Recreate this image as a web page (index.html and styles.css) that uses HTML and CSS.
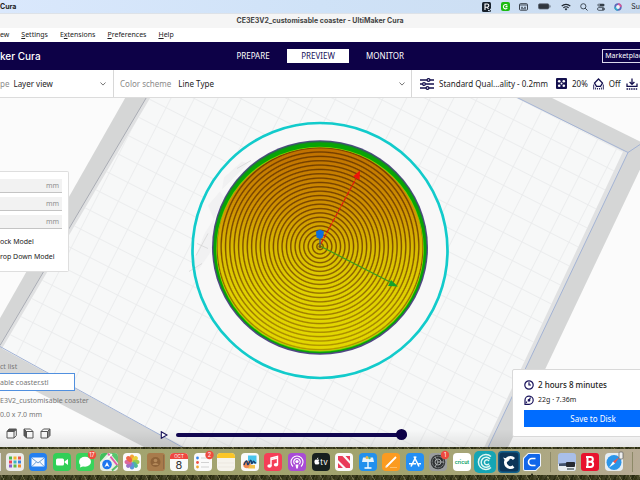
FILE: index.html
```html
<!DOCTYPE html>
<html lang="en">
<head>
<meta charset="utf-8">
<title>UltiMaker Cura</title>
<link rel="stylesheet" href="styles.css">
</head>
<body>
<header class="macbar">
  <span class="mac-app">Cura</span>
  <div class="mac-status">
    <svg width="10" height="10" viewBox="0 0 10 10"><rect width="9" height="10" rx="1.5" fill="#17212b"/><path d="M3 8V2h2.2a1.5 1.5 0 0 1 0 3.2H3M5 5.2 6.5 7" fill="none" stroke="#fff" stroke-width="1.1"/><path d="m6 8 1.2 1.2L9.6 6" fill="none" stroke="#c9d8ea"/></svg>
    <svg width="9" height="9" viewBox="0 0 9 9"><rect width="9" height="9" rx="2" fill="#1dbb12"/><path d="M6.300 3.300A2.200 2.200 0 1 0 6.300 6M4.500 4.600h2" fill="none" stroke="#fff" stroke-width="1.1"/></svg>
    <svg width="9" height="8" viewBox="0 0 9 8"><rect x=".5" y=".7" width="8" height="6.5" rx="1" fill="none" stroke="#39424d"/><path d="M1 2h7M2 4.300h2M5 4.300h2M2 5.800h5" stroke="#39424d" stroke-width=".9"/></svg>
    <svg class="battery" width="13" height="7" viewBox="0 0 13 7"><rect x=".4" y=".8" width="10.6" height="5.2" rx="1.4" fill="#30363e" stroke="#5c6672" stroke-width=".7"/><path d="M12 2.400v2" stroke="#5c6672"/></svg>
    <svg width="10" height="8" viewBox="0 0 10 8"><path d="M.7 3.100a6 6 0 0 1 8.600 0M2.400 4.900a3.700 3.700 0 0 1 5.200 0" fill="none" stroke="#1f2730" stroke-width="1.3"/><path d="m5 7.600 1.400-1.700a2 2 0 0 0-2.800 0z" fill="#1f2730"/></svg>
    <svg width="8" height="8" viewBox="0 0 8 8"><circle cx="3.3" cy="3.3" r="2.6" fill="none" stroke="#333d48" stroke-width=".9"/><path d="m5.200 5.200 2.300 2.300" stroke="#333d48"/></svg>
    <svg width="8" height="8" viewBox="0 0 8 8"><rect x=".5" y=".7" width="7" height="2.7" rx="1.3" fill="#333d48"/><circle cx="2" cy="2" r=".8" fill="#d5e4f6"/><rect x=".5" y="4.6" width="7" height="2.7" rx="1.3" fill="none" stroke="#333d48" stroke-width=".8"/><circle cx="6" cy="6" r="1" fill="#333d48"/></svg>
    <svg width="8" height="8" viewBox="0 0 8 8"><circle cx="4" cy="4" r="3.7" fill="#5b68b8"/><path d="M4 .3A3.700 3.700 0 0 1 7.700 4H4z" fill="#d4589a"/><path d="M.3 4A3.700 3.700 0 0 0 4 7.700V4z" fill="#36a9c9"/><circle cx="4" cy="4" r="1.9" fill="#f3f5fa"/></svg>
    <span class="mac-clock">Su</span>
  </div>
</header>
<div class="titlebar">CE3E3V2_customisable coaster - UltiMaker Cura</div>
<nav class="menubar">
  <a class="menu-view" href="#">ew</a>
  <a href="#"><u>S</u>ettings</a>
  <a href="#">E<u>x</u>tensions</a>
  <a href="#"><u>P</u>references</a>
  <a href="#"><u>H</u>elp</a>
</nav>
<div class="appbar">
  <div class="brand">ker Cura</div>
  <nav class="stages">
    <button type="button">PREPARE</button>
    <button type="button" class="active">PREVIEW</button>
    <button type="button">MONITOR</button>
  </nav>
  <div class="market-slot"><button type="button" class="market">Marketplace</button></div>
</div>
<div class="settings">
  <div class="cell cell-view">
    <label class="view-label" for="view-type">pe</label>
    <div class="dropdown">
      <select id="view-type"><option>Layer view</option></select>
      <svg width="6" height="4" viewBox="0 0 6 4"><path d="m.5.5 2.500 2.600L5.500.5" fill="none" stroke="#777"/></svg>
    </div>
  </div>
  <div class="cell cell-scheme">
    <label for="scheme">Color scheme</label>
    <div class="dropdown">
      <select id="scheme"><option>Line Type</option></select>
      <svg width="6" height="4" viewBox="0 0 6 4"><path d="m.5.5 2.500 2.600L5.500.5" fill="none" stroke="#777"/></svg>
    </div>
  </div>
  <div class="cell cell-profile">
    <svg width="14" height="12" viewBox="0 0 14 12" fill="none" stroke="#14104e" stroke-width="1.300"><path d="M0 2h7M10 2h4M0 6h2.500M5.500 6H14M0 10h6M9 10h5"/><circle cx="8.500" cy="2" r="1.400"/><circle cx="4" cy="6" r="1.400"/><circle cx="7.500" cy="10" r="1.400"/></svg>
    <span class="profile">Standard Qual...ality - 0.2mm</span>
    <svg width="11" height="11" viewBox="0 0 11 11"><rect width="11" height="11" rx="1" fill="#14104e"/><path d="M5.500 2v7M2 5.500h7" stroke="#14104e"/><g fill="#fff"><circle cx="3.200" cy="3.200" r="1.300"/><circle cx="7.800" cy="3.200" r="1.300"/><circle cx="3.200" cy="7.800" r="1.300"/><circle cx="7.800" cy="7.800" r="1.300"/><circle cx="5.500" cy="5.500" r="1"/></g></svg>
    <span class="infill">20%</span>
    <svg width="11" height="12" viewBox="0 0 11 12" fill="none" stroke="#14104e"><path d="M5.500 1 9.500 5 7.500 8.300h-4L1.500 5z" stroke-width="1.300"/><path d="M.7 6.500v5M2.600 9.500v2M4.500 10v1.500M6.500 10v1.500M8.400 9.500v2M10.300 6.500v5" stroke-width=".9"/></svg>
    <span class="support">Off</span>
    <svg width="12" height="12" viewBox="0 0 12 12" fill="none" stroke="#14104e" stroke-width="1.300"><path d="M6 .5v5.800M3.600 4 6 6.400 8.400 4M1 5.500v2.800h10V5.500"/><path d="M.5 11h11" stroke-dasharray="1.500 .8"/></svg>
  </div>
</div>

<main class="viewport">
  <svg class="scene" viewBox="0 98 640 350" preserveAspectRatio="xMidYMid slice">
    <defs>
      <pattern id="grid" width="21" height="21" patternUnits="userSpaceOnUse" patternTransform="translate(7 3) rotate(27)"><path d="M0 .5h21M.5 0v21" stroke="#e9eaeb" stroke-width=".8"/></pattern>
      <linearGradient id="top" x1="0" y1="0" x2="0" y2="1"><stop offset="0" stop-color="#c07000"/><stop offset=".3" stop-color="#cf9200"/><stop offset=".5" stop-color="#d9bc00"/><stop offset=".7" stop-color="#e0d000"/><stop offset="1" stop-color="#e3d800"/></linearGradient>
      <radialGradient id="rings" gradientUnits="userSpaceOnUse" cx="320" cy="247" r="4.350" spreadMethod="repeat"><stop offset="0" stop-color="#6a3800" stop-opacity="0"/><stop offset=".42" stop-color="#6a3800" stop-opacity="0"/><stop offset=".7" stop-color="#6a3800" stop-opacity=".95"/><stop offset=".8" stop-color="#6a3800" stop-opacity=".8"/><stop offset="1" stop-color="#6a3800" stop-opacity="0"/></radialGradient>
      <linearGradient id="fade" x1="0" y1="0" x2="0" y2="1"><stop offset="0" stop-color="#fff"/><stop offset=".5" stop-color="#e4e4e4"/><stop offset="1" stop-color="#6c6c6c"/></linearGradient>
      <mask id="depth"><rect x="210" y="140" width="220" height="216" fill="url(#fade)"/></mask>
      <linearGradient id="shade" x1="0" y1="0" x2="0" y2="1"><stop offset="0" stop-color="#000" stop-opacity="0"/><stop offset="1" stop-color="#000" stop-opacity=".09"/></linearGradient>
    </defs>
    <rect y="98" width="640" height="350" fill="#fbfbfb"/>
    <path d="M-24 361 126 97H549L640 142V170L508 448H145z" fill="#d5d6d6"/>
    <path d="M-1 347 147 97H515L628 153 488 448H183z" fill="#e0e1e2"/>
    <path d="M2 349 151 97H515L623 152 484 448H183z" fill="#f7f8f8"/>
    <path d="M2 349 151 97H515L623 152 484 448H183z" fill="url(#grid)"/>
    <path d="M0 346 147 97" fill="none" stroke="#a9acb4"/>
    <path d="M515 97 628 153 488 448M628 153l12-8M0 347l183 101" fill="none" stroke="#a3b3d4"/>
    <circle cx="320" cy="251" r="126" fill="#f8f8f8"/>
    <path d="m224 178 18-16 6 2-26 26zM208 206l12-14 4 6-10 22zM204 235l10-16-1 30-15 22-6-4z" fill="#f1f1f2"/>
    <path d="m189 272 13-8m-6-8 12-22m-11 10 11 5m29-80 14-8" fill="none" stroke="#d2d2d2" stroke-width=".7"/>
    <circle cx="320" cy="251" r="127.500" fill="none" stroke="#12cbcb" stroke-width="2.700"/>
    <ellipse cx="320" cy="248" rx="108" ry="107.300" fill="#514884"/>
    <ellipse cx="320" cy="247.800" rx="106.800" ry="106.100" fill="#207a3c"/>
    <ellipse cx="320" cy="248.300" rx="106.200" ry="105.200" fill="#08a505"/>
    <ellipse cx="320" cy="249.700" rx="103.800" ry="102.500" fill="#83d400"/>
    <ellipse cx="320" cy="249.700" rx="103.200" ry="101.600" fill="url(#top)"/>
    <ellipse cx="320" cy="249.700" rx="103.200" ry="101.600" fill="url(#rings)" mask="url(#depth)"/>
    <path d="m321 244 35-65" stroke="#e31b0c" stroke-width="1.200" stroke-dasharray="5 1"/>
    <path d="m360 171-.5 9.500-6.500-3.500z" fill="#ee1408"/>
    <path d="m321 247 70 36" stroke="#3a9c1c" stroke-width="1.200"/>
    <path d="m398 287-10-.5 3-6z" fill="#13a32c"/>
    <path d="M320 238v8" stroke="#4a6474" stroke-width="1.500"/>
    <path d="m320 230 4 2-1 6-3 1.500-3.500-1.500-.5-6z" fill="#0d6ee0"/>
    <circle cx="320" cy="247" r="1.500" fill="#6d5512"/>
    <rect y="430" width="640" height="18" fill="url(#shade)"/>
  </svg>

  <section class="transform">
    <label class="field"><input type="text" aria-label="X"><span>mm</span></label>
    <label class="field"><input type="text" aria-label="Y"><span>mm</span></label>
    <label class="field"><input type="text" aria-label="Z"><span>mm</span></label>
    <div class="options">
      <div>ock Model</div>
      <div>rop Down Model</div>
    </div>
  </section>

  <section class="objects">
    <label for="object-name">ct list</label>
    <input id="object-name" type="text" value="able coaster.stl">
    <div class="project">E3V2_customisable coaster</div>
    <div class="dims">0.0 x 7.0 mm</div>
    <div class="views">
      <button type="button" aria-label="Top view"><svg width="11" height="11" viewBox="0 0 11 11" fill="none" stroke="#555"><path d="M1 3.500h7v6.500H1zM8 10l2.300-2.500V1.500L8 3.500"/><path d="m1 3.500 2-2.500h7.300L8 3.500z" fill="#555"/></svg></button>
      <button type="button" aria-label="Left view"><svg width="11" height="11" viewBox="0 0 11 11" fill="none" stroke="#555"><path d="M3.500 3.500h6.500v6.500H3.500zM1 1h6.500L10 3.500"/><path d="m1 1 2.500 2.500V10L1 7.500z" fill="#555"/></svg></button>
      <button type="button" aria-label="Right view"><svg width="11" height="11" viewBox="0 0 11 11" fill="none" stroke="#555"><path d="M1 3.500h6.500v6.500H1zM1 3.500 3.500 1H10"/><path d="M7.500 3.500 10 1v6.500L7.500 10z" fill="#888"/></svg></button>
    </div>
  </section>

  <div class="player">
    <button type="button" aria-label="Play"><svg width="8" height="8" viewBox="0 0 8 8"><path d="m1.300.7 5.700 3.300-5.700 3.300z" fill="#fff" stroke="#17115a" stroke-width="1.100"/></svg></button>
    <input type="range" min="0" max="100" value="100" aria-label="Path position">
  </div>

  <section class="job">
    <div class="job-time"><svg width="10" height="10" viewBox="0 0 10 10" fill="none" stroke="#17115a" stroke-width="1.200"><circle cx="5" cy="5" r="4.200"/><path d="M5 2.300V5h2"/></svg><span>2 hours 8 minutes</span></div>
    <div class="job-use"><svg width="10" height="10" viewBox="0 0 10 10" fill="none" stroke="#17115a" stroke-width="1.200"><path d="M1 9.300V5a4.100 4.100 0 1 1 4 4.300z"/><circle cx="5" cy="5.300" r=".8" fill="#17115a"/><path d="m5.500 4.500 1-2M3 6.500 2 8"/></svg><span>22g · 7.36m</span></div>
    <button type="button" class="save">Save to Disk</button>
  </section>
</main>

<footer class="dock">
  <div class="shelf">
    <span class="sliver"></span>
    <div class="apps">
      <svg viewBox="0 0 18 18"><rect width="18" height="18" rx="4" fill="#ececec"/><g stroke-width="3"><path d="M3 5h3" stroke="#49b64d"/><path d="M7.500 5h3" stroke="#f4b22b"/><path d="M12 5h3" stroke="#e8594c"/><path d="M3 9h3" stroke="#e45"/><path d="M7.500 9h3" stroke="#3bb4c6"/><path d="M12 9h3" stroke="#3c7fe0"/><path d="M3 13h3" stroke="#8c5ac8"/><path d="M7.500 13h3" stroke="#5fbb46"/><path d="M12 13h3" stroke="#ee8a2b"/></g></svg>
      <svg viewBox="0 0 18 18"><rect width="18" height="18" rx="4" fill="#237ff0"/><rect x="2.500" y="4.500" width="13" height="9" rx="1" fill="#f3f8ff"/><path d="m2.800 5 6.200 5 6.200-5M3 13.300l4.500-4.500m7.500 4.500-4.500-4.500" fill="none" stroke="#5b92cf" stroke-width=".9"/></svg>
      <svg viewBox="0 0 18 18"><rect width="18" height="18" rx="4" fill="#31cf57"/><rect x="3" y="5.500" width="8" height="7" rx="1.500" fill="#fff"/><path d="m11.500 8.500 3.500-2.500v6l-3.500-2.500z" fill="#fff"/></svg>
      <svg viewBox="0 0 18 18"><rect width="18" height="18" rx="4" fill="#37d45b"/><ellipse cx="9" cy="8.800" rx="6" ry="5" fill="#fff"/><path d="m4.500 11.500-.5 3 4-1.500z" fill="#fff"/><circle cx="16" cy="2" r="4.200" fill="#ee4b3e"/><text x="16" y="4" font-size="5.500" text-anchor="middle" fill="#fff">17</text></svg>
      <svg viewBox="0 0 18 18"><rect width="18" height="18" rx="4" fill="#e9efe5"/><path d="M0 4a4 4 0 0 1 4-4h4L0 9z" fill="#42be5c"/><path d="M10 0h4a4 4 0 0 1 4 4v6z" fill="#59c56d"/><path d="m8 .5 9.500 12" stroke="#e25bab" stroke-width="2"/><path d="M1 12 12 1" stroke="#fff" stroke-width="1.500"/><path d="m12 17.500 5.500-5" stroke="#57bd67" stroke-width="2"/><circle cx="7" cy="11.500" r="4.800" fill="#1e76ef"/><path d="m4.500 14 2.500-5 2.500 5L7 12.700z" fill="#fff"/></svg>
      <svg viewBox="0 0 18 18"><rect width="18" height="18" rx="4" fill="#fafafa"/><g opacity=".9"><ellipse cx="9" cy="5" rx="2.300" ry="3.500" fill="#f59b23"/><ellipse cx="9" cy="5" rx="2.300" ry="3.500" fill="#e8cb25" transform="rotate(45 9 9)"/><ellipse cx="9" cy="5" rx="2.300" ry="3.500" fill="#8fc43e" transform="rotate(90 9 9)"/><ellipse cx="9" cy="5" rx="2.300" ry="3.500" fill="#3db28c" transform="rotate(135 9 9)"/><ellipse cx="9" cy="5" rx="2.300" ry="3.500" fill="#4a8ad8" transform="rotate(180 9 9)"/><ellipse cx="9" cy="5" rx="2.300" ry="3.500" fill="#9064c0" transform="rotate(225 9 9)"/><ellipse cx="9" cy="5" rx="2.300" ry="3.500" fill="#d95a93" transform="rotate(270 9 9)"/><ellipse cx="9" cy="5" rx="2.300" ry="3.500" fill="#ee5435" transform="rotate(315 9 9)"/></g></svg>
      <svg viewBox="0 0 18 18"><rect width="18" height="18" rx="3" fill="#a87b4b"/><path d="M16.500 2v14" stroke="#8f6b46"/><circle cx="8.500" cy="9" r="5" fill="#8e6339"/><circle cx="8.500" cy="7.500" r="1.800" fill="#b58a5a"/><path d="M5.300 12a3.500 3.500 0 0 1 6.400 0z" fill="#b58a5a"/></svg>
      <svg viewBox="0 0 18 18"><rect width="18" height="18" rx="4" fill="#fafafa"/><path d="M0 6V4a4 4 0 0 1 4-4h10a4 4 0 0 1 4 4v2z" fill="#ee4740"/><text x="9" y="4.800" font-size="4.500" text-anchor="middle" fill="#fff">OCT</text><text x="9" y="15.800" font-size="11" text-anchor="middle" fill="#333">8</text></svg>
      <svg viewBox="0 0 18 18"><rect width="18" height="18" rx="4" fill="#fafafa"/><circle cx="3.500" cy="5" r="1.400" fill="#3585ee"/><circle cx="3.500" cy="9.500" r="1.400" fill="#ee5144"/><circle cx="3.500" cy="14" r="1.400" fill="#f3a42d"/><path d="M7 5h8M7 9.500h8M7 14h8" stroke="#d2d2d2"/><circle cx="15.500" cy="2" r="4.200" fill="#ee4b3e"/><text x="15.500" y="4" font-size="5.500" text-anchor="middle" fill="#fff">2</text></svg>
      <svg viewBox="0 0 18 18"><rect width="18" height="18" rx="4" fill="#f5f3ec"/><path d="M0 5V4a4 4 0 0 1 4-4h10a4 4 0 0 1 4 4v1z" fill="#fbc628"/><path d="M1 10h16M1 14h16" stroke="#e6e3da" stroke-width=".6"/></svg>
      <svg viewBox="0 0 18 18"><rect width="18" height="18" rx="4" fill="#fafafa"/><rect x="7" y="2.500" width="8.500" height="8" fill="#48c4ed"/><circle cx="6" cy="11.500" r="3.800" fill="#f18a55"/><path d="M9 12h5v3.500H7z" fill="#f3c14b"/><path d="M3 12c1-3 2.500-5 3-3.500S6 13 7.500 11 9 6.500 10 7.500s0 4 1 3 1-3 2-2 .5 2.500 2 1" fill="none" stroke="#183d70" stroke-width="1.300"/></svg>
      <svg viewBox="0 0 18 18"><rect width="18" height="18" rx="4" fill="#f53e57"/><path d="M7 13V5l6.500-1.500v8" fill="none" stroke="#fff" stroke-width="1.400"/><path d="m7 6.500 6.500-1.500" stroke="#fff" stroke-width="1.500"/><ellipse cx="5.500" cy="13" rx="2.200" ry="1.700" fill="#fff"/><ellipse cx="12" cy="11.700" rx="2.200" ry="1.700" fill="#fff"/></svg>
      <svg viewBox="0 0 18 18"><rect width="18" height="18" rx="4" fill="#a94bd5"/><g fill="none" stroke="#fff" stroke-width="1.100"><path d="M5 13.500a6 6 0 1 1 8 0"/><path d="M6.700 11.200a3.300 3.300 0 1 1 4.600 0"/></g><circle cx="9" cy="8.500" r="1.600" fill="#fff"/><path d="m7.500 11.500.7 4h1.600l.7-4z" fill="#fff"/></svg>
      <svg viewBox="0 0 18 18"><rect width="18" height="18" rx="4" fill="#17201f"/><path d="M5 6.800c1.500-.8 2.300.2 2.300.2-1.100.8-.9 2.300.2 2.800-.7 1.900-1.500 2-2.500 1.500-1 .5-1.700.3-2.400-1.400-.7-2 .5-3.900 2.400-3.100zM5 6.300c0-1 .6-1.500 1.300-1.700 0 1-.4 1.600-1.300 1.700z" fill="#fff"/><text x="12" y="11.500" font-size="8" text-anchor="middle" fill="#fff">tv</text></svg>
      <svg viewBox="0 0 18 18"><rect width="18" height="18" rx="4" fill="#fafafa"/><path d="M3 3h4.500L15 11v4h-4L3 7zM10.500 3H15v5zM3 10l5 5H3z" fill="#e93b59"/></svg>
      <svg viewBox="0 0 18 18"><rect width="18" height="18" rx="4" fill="#2290ed"/><path d="M4 4.500h10l1 4.500H3z" fill="#e8f3fb"/><path d="M9 9v5.500M5.500 15h7" stroke="#fff" stroke-width="1.300"/><circle cx="8" cy="4.500" r="1.500" fill="#f0b74a"/><circle cx="10.500" cy="5" r="1.200" fill="#4eb576"/></svg>
      <svg viewBox="0 0 18 18"><rect width="18" height="18" rx="4" fill="#fb9b20"/><path d="M4 14 14 4" stroke="#fff" stroke-width="1.800"/><path d="m3 15 1.500-2.500 1 1z" fill="#eee"/><path d="M8 14.500h7" stroke="#ffc87b" stroke-width=".8"/></svg>
      <svg viewBox="0 0 18 18"><rect width="18" height="18" rx="4" fill="#238ff5"/><path d="M10 3.500 5 13.500M8 3.500l5 10M3 10.800h7m2.500 0H15" stroke="#fff" stroke-width="1.600"/></svg>
      <svg viewBox="0 0 18 18"><rect width="18" height="18" rx="4" fill="#9a9d9e"/><circle cx="9" cy="9" r="7.300" fill="#303335"/><circle cx="9" cy="9" r="5.800" fill="none" stroke="#9b9fa0" stroke-dasharray="1 .6"/><circle cx="9" cy="9" r="3" fill="none" stroke="#a9adae"/><path d="M9 9h6M9 9 6 4M9 9l-3 5" stroke="#a9adae"/><circle cx="16" cy="2" r="4.200" fill="#ee4b3e"/><text x="16" y="4" font-size="5.500" text-anchor="middle" fill="#fff">1</text></svg>
      <svg viewBox="0 0 18 18"><rect width="18" height="18" rx="4" fill="#fff"/><text x="9" y="10.800" font-size="5" font-weight="700" text-anchor="middle" fill="#16a56e">cricut</text></svg>
      <svg class="large" viewBox="0 0 22 22"><rect width="22" height="22" rx="5" fill="#15a5b4"/><g fill="none" stroke="#dff7f4" stroke-width="1.500"><path d="M17 5.500a7.500 7.500 0 1 0 0 11"/><path d="M16 8a5 5 0 1 0 0 6.500"/><path d="M15 10a2.500 2.500 0 1 0 0 2.700"/></g></svg>
      <svg class="large" viewBox="0 0 22 22"><rect width="22" height="22" rx="4" fill="#12618c"/><rect x="1.500" y="1.500" width="19" height="19" rx="3" fill="#0d3558"/><path d="M16 8a5 5 0 1 0-.5 7.500" fill="none" stroke="#fff" stroke-width="3"/><path d="m5 6.500 7 2-3.500 3z" fill="#fff"/></svg>
      <svg viewBox="0 0 18 18"><path d="M5 0h11a2 2 0 0 1 2 2v11l-5 5H2a2 2 0 0 1-2-2V5z" fill="#eef4ff"/><path d="M5.500 1H16a1 1 0 0 1 1 1v10.500L12.500 17H2a1 1 0 0 1-1-1V5.500z" fill="#1267e9"/><path d="M12.500 5.500H9a3.500 3.500 0 0 0 0 7h3.500" fill="none" stroke="#fff" stroke-width="1.600"/><circle cx="9" cy="21.500" r=".9" fill="#17180c"/></svg>
    </div>
    <span class="divider"></span>
    <div class="apps apps-recent">
      <svg viewBox="0 0 18 18"><rect width="18" height="18" rx="3" fill="#a9bfe9"/><path d="M0 11h18v4a3 3 0 0 1-3 3H3a3 3 0 0 1-3-3z" fill="#e7ecef"/><path d="M1 10.500 8 10v3H1z" fill="#42526b"/><rect x="8" y="9" width="9" height="5" rx="1" fill="#262a31"/><path d="M9 16h7" stroke="#808b90" stroke-width="2"/></svg>
      <svg viewBox="0 0 18 18"><rect width="18" height="18" rx="3" fill="#e8112d"/><path d="M5 4h4.500a2.300 2.300 0 0 1 0 4.700H6.500m3 0a2.500 2.500 0 0 1 0 5.300H5M6.500 4v10" fill="none" stroke="#fff" stroke-width="2"/></svg>
      <svg viewBox="0 0 18 18"><rect width="18" height="18" rx="4" fill="#e7edf2"/><circle cx="9" cy="9.500" r="7.500" fill="#2b95e9"/><path d="m14.500 4-4.500 6.500L8 8.500z" fill="#f2544b"/><path d="m4 14.500 4-6 2 2z" fill="#fff"/><rect x="14" y="-1" width="4" height="7" rx="1" fill="#eee" stroke="#666" stroke-width=".8"/></svg>
    </div>
    <span class="divider"></span>
    <span class="tail"></span>
  </div>
</footer>
</body>
</html>
```
FILE: styles.css
```css
* { box-sizing: border-box; }

body {
  margin: 0;
  height: 100vh;
  display: flex;
  flex-direction: column;
  overflow: hidden;
  background: #fff;
  color: #222;
  font-family: "Noto Sans", sans-serif;
  font-size: 8px;
  line-height: 12px;
}

button, input, select {
  font: inherit;
  color: inherit;
  margin: 0;
  padding: 0;
  border: 0;
  border-radius: 0;
  background: none;
  appearance: none;
}

svg { display: block; flex: none; }
a { color: inherit; text-decoration: none; }

/* System menu bar */
.macbar {
  flex: none;
  height: 13px;
  display: flex;
  align-items: center;
  justify-content: space-between;
  background: linear-gradient(90deg, #dae8fc, #cfe2f7 50%, #cbdcf0);
  font-family: Inter, sans-serif;
}
.mac-app { font-weight: 700; font-size: 7px; }
.mac-status { display: flex; align-items: center; gap: 9px; }
.battery { margin: 0 1px; }
.mac-clock { font-size: 7px; }

.titlebar {
  flex: none;
  height: 15px;
  line-height: 14px;
  text-align: center;
  background: #f5f5f5;
  border-top: 1px solid #dde2e8;
  font-family: Inter, sans-serif;
  font-size: 7px;
  font-weight: 700;
  color: #444;
}

.menubar {
  flex: none;
  height: 14px;
  display: flex;
  align-items: center;
  gap: 12px;
  font-size: 7px;
}

/* Application header */
.appbar {
  flex: none;
  height: 28px;
  display: grid;
  grid-template-columns: 1fr auto 1fr;
  align-items: center;
  background: #0d0147;
  color: #fff;
}
.brand { font-family: Inter, sans-serif; font-size: 10px; font-weight: 500; white-space: nowrap; }
.stages { display: flex; gap: 1px; }
.stages button { width: 66px; height: 14px; text-align: center; }
.stages button + button { width: 62px; }
.stages button:last-child { width: 70px; }
.stages .active { background: #fff; color: #17115a; }
.market-slot { display: flex; justify-content: flex-end; }
.market {
  height: 14px;
  padding: 0 6px 0 2px;
  margin-right: -13px;
  border: 1px solid #dcd9ec;
  font-size: 7px;
}

.settings {
  flex: none;
  height: 28px;
  display: grid;
  grid-template-columns: 113fr 298fr 229fr;
  border-bottom: 1px solid #dcdcdc;
}
.cell { display: flex; align-items: center; min-width: 0; white-space: nowrap; }
.cell + .cell { border-left: 1px solid #d8d8d8; }
.cell label { color: #8b8b8b; }
.cell-view { padding-right: 7px; gap: 4px; }
.cell-scheme { padding: 0 6px 0 6px; gap: 7px; }
.dropdown { flex: 1; display: grid; align-items: center; min-width: 0; }
.dropdown > * { grid-area: 1 / 1; }
.dropdown svg { justify-self: end; }
.cell-profile { padding-left: 8px; gap: 5px; }
.profile { margin-right: 3px; }

/* 3D view and its floating panels */
.viewport { position: relative; flex: 1; min-height: 0; overflow: hidden; }
.scene { width: 100%; height: 100%; }

.transform {
  position: absolute;
  top: 73px;
  left: 0;
  width: 69px;
  padding: 7px 6px 7px 0;
  background: #fff;
  border: 1px solid #dedede;
  border-left: 0;
  border-radius: 0 2px 2px 0;
}
.field {
  display: flex;
  align-items: center;
  height: 14px;
  margin-bottom: 4px;
  padding-right: 3px;
  background: #f2f2f2;
  border-bottom: 1px solid #c4c4c4;
  color: #909090;
  font-size: 7px;
}
.field input { flex: 1; min-width: 0; }
.options { margin-top: 5px; font-size: 7px; line-height: 15px; white-space: nowrap; }

.objects {
  position: absolute;
  left: 0;
  bottom: 8px;
  font-size: 7px;
  color: #777;
  white-space: nowrap;
}
.objects label { display: block; }
.objects input {
  display: block;
  width: 75px;
  height: 18px;
  background: #fff;
  border: 1px solid #5190df;
  border-left: 0;
}
.project { margin-top: 4px; }
.dims { margin-top: 2px; }
.views { display: flex; gap: 6px; margin: 7px 0 0 6px; }

.player {
  position: absolute;
  left: 25%;
  right: 36%;
  bottom: 6px;
  height: 12px;
  display: flex;
  align-items: center;
  gap: 8px;
}
.player input { flex: 1; min-width: 0; height: 12px; margin-right: 3px; }
.player input::-webkit-slider-runnable-track { height: 4px; border-radius: 2px; background: #110650; }
.player input::-webkit-slider-thumb {
  appearance: none;
  width: 11px;
  height: 11px;
  margin-top: -4px;
  border-radius: 50%;
  background: #0d0147;
}

.job {
  position: absolute;
  right: -34px;
  bottom: 10px;
  width: 162px;
  padding: 8px 11px 9px;
  background: #fff;
  border: 1px solid #d9d9d9;
  border-radius: 2px;
}
.job-time, .job-use { display: flex; align-items: center; gap: 4px; height: 14px; }
.job-time { font-weight: 500; }
.job-use { font-size: 7px; margin-top: 1px; }
.save { display: block; width: 100%; height: 17px; margin-top: 3px; background: #006cff; color: #fff; text-align: center; }

/* Dock */
.dock {
  flex: none;
  height: 33px;
  padding: 2px 0 5px;
  background:
    repeating-linear-gradient(61deg, #37381d99 0 3px, #77754f99 3px 4px, #26280f99 4px 9px),
    repeating-linear-gradient(112deg, #45451f 0 2px, #5f5c3c 2px 5px, #2c2e15 5px 7px, #6d6a45 7px 8px);
}
.shelf {
  height: 26px;
  display: flex;
  align-items: center;
  background: linear-gradient(90deg, #a39c7c, #a3a470 15%, #a1a36d 60%, #a9a67c 80%, #b8ac96);
}
.sliver { width: 1px; height: 18px; background: #ddd; margin-right: 2px; }
.apps { flex: 541; display: grid; grid-template-columns: repeat(23, 1fr); align-items: center; justify-items: center; font-family: Inter, sans-serif; }
.apps-recent { flex: 71; grid-template-columns: repeat(3, 1fr); }
.apps svg { width: 18px; height: 18px; overflow: visible; }
.apps .large { width: 22px; height: 22px; }
.divider { width: 1px; height: 20px; margin: 0 4px 0 6px; background: #8d8968; }
.tail { width: 3px; height: 10px; }
```
